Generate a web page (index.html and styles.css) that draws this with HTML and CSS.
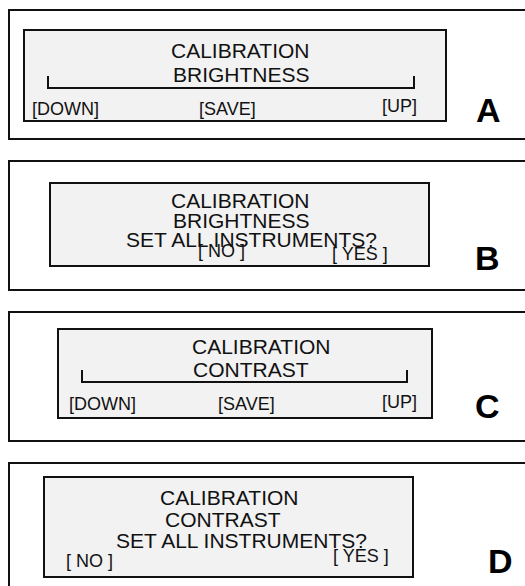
FILE: index.html
```html
<!DOCTYPE html>
<html>
<head>
    <title>Calibration screens</title>
    <link rel="stylesheet" href="styles.css">
</head>
<body>
    <div class="step">
        <div class="lcd lcd-a">
            <div class="ln a1">CALIBRATION</div>
            <div class="ln a2">BRIGHTNESS</div>
            <div class="slider slider-a"></div>
            <div class="keys keys-a">
                <span class="key down">[DOWN]</span><span class="key save">[SAVE]</span><span class="key up">[UP]</span>
            </div>
        </div>
        <div class="tag tag-a">A</div>
    </div>

    <div class="step">
        <div class="lcd lcd-b">
            <div class="ln b1">CALIBRATION</div>
            <div class="ln b2">BRIGHTNESS</div>
            <div class="ln b3">SET ALL INSTRUMENTS?</div>
            <div class="keys keys-b">
                <span class="key no">[ NO ]</span><span class="key yes">[ YES ]</span>
            </div>
        </div>
        <div class="tag tag-b">B</div>
    </div>

    <div class="step">
        <div class="lcd lcd-c">
            <div class="ln c1">CALIBRATION</div>
            <div class="ln c2">CONTRAST</div>
            <div class="slider slider-c"></div>
            <div class="keys keys-c">
                <span class="key down">[DOWN]</span><span class="key save">[SAVE]</span><span class="key up">[UP]</span>
            </div>
        </div>
        <div class="tag tag-c">C</div>
    </div>

    <div class="step">
        <div class="lcd lcd-d">
            <div class="ln d1">CALIBRATION</div>
            <div class="ln d2">CONTRAST</div>
            <div class="ln d3">SET ALL INSTRUMENTS?</div>
            <div class="keys keys-d">
                <span class="key no">[ NO ]</span><span class="key yes">[ YES ]</span>
            </div>
        </div>
        <div class="tag tag-d">D</div>
    </div>
</body>
</html>
```

FILE: styles.css
```css
html, body {
    overflow: hidden;
}

body {
    margin: 0;
    padding-top: 9px;
    background-color: #fff;
    font-family: "Liberation Sans", Arial, sans-serif;
    color: #111;
}

/* outer frame, open on the right */
.step {
    display: flex;
    align-items: flex-start;
    height: 127px;
    margin: 0 0 20px 8px;
    border: 2px solid #111;
    border-right: none;
}

/* the display panel */
.lcd {
    flex: none;
    box-sizing: border-box;
    border: 2px solid #111;
    background-color: #f2f2f2;
}

.ln {
    font-size: 21px;
    line-height: 21px;
    white-space: nowrap;
}

.slider {
    box-sizing: border-box;
    height: 13px;
    border: 2px solid #111;
    border-top: none;
}

.keys {
    display: flex;
    align-items: flex-start;
}

.key {
    flex: none;
    font-size: 18px;
    line-height: 18px;
    white-space: nowrap;
}

.tag {
    flex: none;
    font-size: 34px;
    line-height: 34px;
    font-weight: bold;
    color: #000;
}

/* A */
.lcd-a { margin: 18px 0 0 13px; width: 424px; height: 93px; }
.a1 { margin-top: 9px; padding-left: 146px; }
.a2 { margin-top: 3px; padding-left: 148px; }
.slider-a { margin: -9px 0 0 22px; width: 368px; }
.keys-a { margin-top: 11px; padding-left: 7px; }
.keys-a .down { width: 167px; }
.keys-a .save { width: 183px; }
.keys-a .up { margin-top: -3px; }
.tag-a { margin: 82px 0 0 29px; }

/* B */
.lcd-b { margin: 20px 0 0 39px; width: 381px; height: 85px; }
.b1 { margin-top: 6px; padding-left: 120px; }
.b2 { margin-top: -1px; padding-left: 122px; }
.b3 { margin-top: -2px; padding-left: 75px; }
.keys-b { margin-top: -8px; padding-left: 147px; }
.keys-b .no { width: 134px; }
.keys-b .yes { margin-top: 3px; }
.tag-b { margin: 79px 0 0 45px; }

/* C */
.lcd-c { margin: 15px 0 0 47px; width: 376px; height: 91px; }
.c1 { margin-top: 6px; padding-left: 133px; }
.c2 { margin-top: 2px; padding-left: 134px; }
.slider-c { margin: -10px 0 0 22px; width: 327px; }
.keys-c { margin-top: 12px; padding-left: 10px; }
.keys-c .down { width: 149px; }
.keys-c .save { width: 164px; }
.keys-c .up { margin-top: -2px; }
.tag-c { margin: 76px 0 0 42px; }

/* D */
.lcd-d { margin: 12px 0 0 33px; width: 371px; height: 102px; }
.d1 { margin-top: 9px; padding-left: 115px; }
.d2 { margin-top: 1px; padding-left: 120px; }
.d3 { margin-top: 0; padding-left: 71px; }
.keys-d { margin-top: 1px; padding-left: 21px; }
.keys-d .no { width: 267px; }
.keys-d .yes { margin-top: -5px; }
.tag-d { margin: 80px 0 0 74px; }
```
